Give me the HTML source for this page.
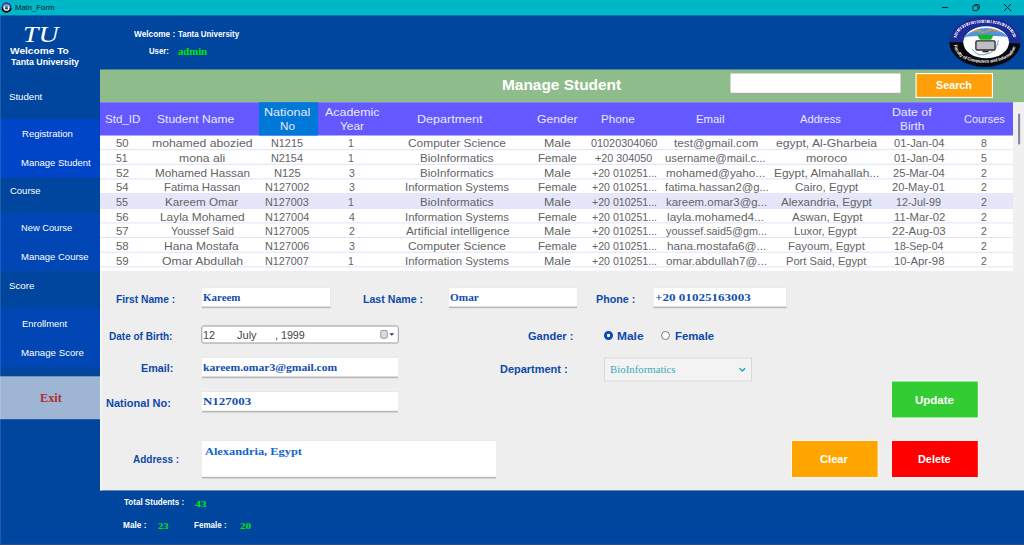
<!DOCTYPE html>
<html><head><meta charset="utf-8"><title>Main_Form</title>
<style>
*{box-sizing:border-box;margin:0;padding:0}
html,body{width:1024px;height:545px;overflow:hidden;background:#00469e;font-family:"Liberation Sans",sans-serif}
.a{position:absolute}
.t{position:absolute;white-space:pre;line-height:1;transform-origin:0 50%;display:block}
#win{position:absolute;left:0;top:0;width:1024px;height:545px;overflow:hidden;background:#00469e}
</style></head><body>
<div id="win">
<svg class="a" style="left:0;top:0" width="1024" height="545" viewBox="0 0 1024 545" shape-rendering="geometricPrecision">
<!-- title bar -->
<rect x="0" y="0" width="1024" height="15.4" fill="#00b7c7"/>
<!-- sidebar blocks -->
<rect x="0" y="118.7" width="100" height="58.8" fill="#0044c8"/>
<rect x="0" y="212.6" width="100" height="58.6" fill="#0046b5"/>
<rect x="0" y="308.2" width="100" height="58.8" fill="#0046b5"/>
<rect x="0" y="376.3" width="100" height="42.9" fill="#9eb5d4"/>
<!-- green band -->
<rect x="100" y="69.5" width="924" height="33" fill="#8fbc8b"/>
<rect x="730.5" y="73.5" width="170" height="20.6" fill="#a8a8a8"/>
<rect x="730.5" y="73.5" width="170" height="19.3" fill="#fff"/>
<rect x="915.5" y="73" width="77.5" height="25" fill="#fff"/>
<rect x="916.6" y="74.1" width="75.3" height="22.8" fill="#ffa00a"/>
<!-- table -->
<rect x="100" y="102.3" width="924" height="169" fill="#fff"/>
<rect x="1013" y="102.3" width="11" height="168.7" fill="#f0f0f0"/>
<rect x="1018" y="113.6" width="2.2" height="30.9" rx="1" fill="#8a889e"/>
<rect x="100" y="102.3" width="913" height="33.2" fill="#6359ff"/>
<rect x="259" y="102.3" width="59" height="33.2" fill="#0078d7"/>
<rect x="100" y="149.15" width="913" height="1" fill="#e2e2f8"/>
<rect x="100" y="163.80" width="913" height="1" fill="#e2e2f8"/>
<rect x="100" y="178.45" width="913" height="1" fill="#e2e2f8"/>
<rect x="100" y="193.10" width="913" height="1" fill="#e2e2f8"/>
<rect x="100" y="194.10" width="913" height="14.65" fill="#e6e6fa"/>
<rect x="100" y="207.75" width="913" height="1" fill="#e2e2f8"/>
<rect x="100" y="222.40" width="913" height="1" fill="#e2e2f8"/>
<rect x="100" y="237.05" width="913" height="1" fill="#e2e2f8"/>
<rect x="100" y="251.70" width="913" height="1" fill="#e2e2f8"/>
<rect x="100" y="266.35" width="913" height="1" fill="#e2e2f8"/>

<!-- form panel -->
<rect x="100" y="270.8" width="924" height="219.6" fill="#eeeeee"/><rect x="100" y="270.8" width="2" height="219.6" fill="#f4f4f4"/>
<g fill="#b9b9b9">
<rect x="202" y="287.5" width="128.5" height="20.7"/><rect x="449" y="287.5" width="128" height="20.7"/><rect x="653.3" y="287.5" width="133.2" height="20.7"/>
<rect x="202" y="357.5" width="196" height="20.7"/><rect x="202" y="391.8" width="196" height="20.7"/><rect x="202" y="440.5" width="294" height="38"/>
</g>
<g fill="#fff">
<rect x="202" y="287.5" width="128.5" height="19"/><rect x="449" y="287.5" width="128" height="19"/><rect x="653.3" y="287.5" width="133.2" height="19"/>
<rect x="202" y="357.5" width="196" height="19"/><rect x="202" y="391.8" width="196" height="19"/><rect x="202" y="440.5" width="294" height="36.3"/>
</g>
<!-- date picker -->
<rect x="201.8" y="326" width="196.5" height="17" rx="1.5" fill="#fff" stroke="#999" stroke-width="1"/>
<g transform="translate(380,330)"><rect x="0.8" y="0.6" width="6.4" height="7.6" rx="1.2" fill="#e4e6ee" stroke="#8e838c" stroke-width="0.9"/><path d="M2.2 2v5M4 2v5M5.8 2v5" stroke="#c4c8d8" stroke-width="0.6"/><path d="M9.4 3.2h4.8l-2.4 2.6z" fill="#1c3570"/></g>
<!-- radios -->
<circle cx="608.5" cy="335.5" r="3.1" fill="#fff" stroke="#0a4bb5" stroke-width="2.9"/>
<circle cx="665.5" cy="335.5" r="4" fill="#fff" stroke="#7c7c7c" stroke-width="1"/>
<!-- dropdown -->
<rect x="604.5" y="358" width="147" height="23" fill="#f3f3f3" stroke="#dadada" stroke-width="1"/>
<path d="M739.5 368.2L742.3 371L745.1 368.2" fill="none" stroke="#1fa3b8" stroke-width="1.4"/>
<!-- buttons -->
<rect x="891" y="380.5" width="87.8" height="38" fill="#f4fff4"/><rect x="892" y="381.5" width="85.8" height="36" fill="#32cd32"/>
<rect x="791" y="440" width="87.6" height="38" fill="#fff8ea"/><rect x="792" y="441" width="85.6" height="36" fill="#ffa500"/>
<rect x="891" y="440" width="87.8" height="38" fill="#fff0f0"/><rect x="892" y="441" width="85.8" height="36" fill="#ff0000"/>
<rect x="0" y="15.3" width="1" height="530" fill="#fff" opacity="0.12"/><rect x="0" y="543.4" width="1024" height="0.8" fill="#0050c0" opacity="0.6"/><rect x="0" y="544.1" width="1024" height="0.9" fill="#34507a"/>
<!-- window icon -->
<g transform="translate(1.1,2)"><defs><clipPath id="ic"><ellipse cx="5.4" cy="5.5" rx="5.3" ry="5.4"/></clipPath></defs><g clip-path="url(#ic)"><rect x="0" y="0" width="11" height="5.6" fill="#2a3cb4"/><rect x="0" y="5.6" width="11" height="6" fill="#0c0c16"/></g><ellipse cx="5.4" cy="5.6" rx="5" ry="5.1" fill="none" stroke="#cfd6ff" stroke-width="0.7" stroke-dasharray="0.7 1.1" opacity=".55"/><ellipse cx="5.4" cy="5.7" rx="3.2" ry="3.1" fill="#eef1fa"/><path d="M2.6 4.6 Q5.4 1.6 8.2 4.6 Z" fill="#4a8fe0"/><path d="M3.9 3.9h3l-.7 1.3h-1.6z" fill="#20c030"/><rect x="4" y="5.3" width="2.8" height="1.9" rx=".3" fill="#3a3a44"/></g>
<!-- window controls -->
<rect x="942" y="7" width="6" height="1" fill="#0c2430"/>
<g fill="none" stroke="#0c2430" stroke-width="1"><rect x="972.9" y="5.7" width="5" height="5" rx="1.2"/><path d="M974.5 5.5V5.3Q974.5 4.5 975.4 4.5H978.3Q979.3 4.5 979.3 5.4V8.3Q979.3 9.2 978.4 9.2"/><path d="M1004 4L1011 11M1011 4L1004 11"/></g>
</svg>
<!-- logo -->
<svg class="a" style="left:944px;top:12px" width="80" height="60" viewBox="0 0 727 545">
<defs><clipPath id="cl"><ellipse cx="372" cy="272" rx="324" ry="228"/></clipPath>
<clipPath id="ci"><ellipse cx="383" cy="275" rx="208" ry="146"/></clipPath>
<path id="arcb" d="M92 300 Q110 452 372 462 Q634 452 652 300"/>
<path id="arct" d="M100 232 Q130 92 372 84 Q614 92 644 232"/>
</defs>
<g clip-path="url(#cl)"><rect x="0" y="0" width="727" height="280" fill="#1e2d96"/><path d="M0 272 L727 286 L727 545 L0 545Z" fill="#08080f"/></g>
<ellipse cx="383" cy="275" rx="208" ry="146" fill="#fdfdfd"/>
<g clip-path="url(#ci)">
<path d="M150 250 Q383 40 620 250 L565 224 Q383 206 205 224Z" fill="#4f94e0"/>
<path d="M175 120h420v92h-420z" fill="#4f94e0" opacity=".0"/>
</g>
<path d="M270 182 Q300 160 330 178 T400 172 T500 180" fill="none" stroke="#d9962a" stroke-width="16" stroke-dasharray="34 7 22 5"/>
<path d="M298 206h154l-24 46h-100z" fill="#16b32c"/>
<g clip-path="url(#ci)"><path d="M255 335 Q300 420 420 372 Q490 330 492 255" fill="none" stroke="#58aee8" stroke-width="9"/>
<path d="M300 392 Q420 400 500 290" fill="none" stroke="#e3a24a" stroke-width="5" opacity=".8"/></g>
<rect x="290" y="262" width="174" height="83" rx="10" fill="#c4c4c8" stroke="#26262c" stroke-width="12"/>
<path d="M300 275h155M300 292h155M300 309h155M300 326h155" stroke="#aaaab0" stroke-width="5" stroke-dasharray="8 6"/>
<rect x="350" y="352" width="54" height="14" fill="#26262c"/>
<text font-family="'Liberation Sans',sans-serif" font-weight="bold" font-size="41" fill="#f4f4f4" letter-spacing="-1.5"><textPath href="#arcb" startOffset="0" textLength="690" lengthAdjust="spacingAndGlyphs">Faculty of Computers and Information</textPath></text>
<path d="M100 232 Q130 92 372 84 Q614 92 644 232" fill="none" stroke="#e8ebff" stroke-width="26" stroke-dasharray="13 6 22 5 9 7 30 6 12 9 18 5" opacity=".9"/>
<path d="M100 232 Q130 92 372 84 Q614 92 644 232" fill="none" stroke="#1e2d96" stroke-width="9" stroke-dasharray="6 14 10 9 5 17"/>
</svg>

<span class="t" style="left:15.00px;top:4px;font-family:'Liberation Sans', sans-serif;font-size:7.8px;font-weight:normal;font-style:normal;color:#04181e;transform:scaleX(1.0040);">Main_Form</span>
<span class="t" style="left:23.00px;top:23px;font-family:'Liberation Serif', serif;font-size:23.8px;font-weight:normal;font-style:italic;color:#ffffff;transform:scaleX(1.1640);">TU</span>
<span class="t" style="left:10.00px;top:46px;font-family:'Liberation Sans', sans-serif;font-size:9.7px;font-weight:bold;font-style:normal;color:#ffffff;transform:scaleX(1.0462);">Welcome To</span>
<span class="t" style="left:11.00px;top:58px;font-family:'Liberation Sans', sans-serif;font-size:8.3px;font-weight:bold;font-style:normal;color:#ffffff;transform:scaleX(1.0638);">Tanta University</span>
<span class="t" style="left:134.00px;top:31px;font-family:'Liberation Sans', sans-serif;font-size:8.2px;font-weight:bold;font-style:normal;color:#ffffff;transform:scaleX(1.0087);">Welcome :</span>
<span class="t" style="left:178.00px;top:31px;font-family:'Liberation Sans', sans-serif;font-size:8.2px;font-weight:bold;font-style:normal;color:#ffffff;transform:scaleX(0.9680);">Tanta University</span>
<span class="t" style="left:149.00px;top:48px;font-family:'Liberation Sans', sans-serif;font-size:8.2px;font-weight:bold;font-style:normal;color:#ffffff;transform:scaleX(0.9462);">User:</span>
<span class="t" style="left:178.00px;top:47px;font-family:'Liberation Serif', serif;font-size:10.2px;font-weight:bold;font-style:normal;color:#00e600;transform:scaleX(1.0475);">admin</span>
<span class="t" style="left:9.00px;top:92px;font-family:'Liberation Sans', sans-serif;font-size:9.4px;font-weight:normal;font-style:normal;color:#ffffff;transform:scaleX(1.0264);">Student</span>
<span class="t" style="left:22.00px;top:129px;font-family:'Liberation Sans', sans-serif;font-size:9.4px;font-weight:normal;font-style:normal;color:#ffffff;transform:scaleX(1.0166);">Registration</span>
<span class="t" style="left:21.00px;top:158px;font-family:'Liberation Sans', sans-serif;font-size:9.4px;font-weight:normal;font-style:normal;color:#ffffff;transform:scaleX(1.0138);">Manage Student</span>
<span class="t" style="left:10.00px;top:186px;font-family:'Liberation Sans', sans-serif;font-size:9.4px;font-weight:normal;font-style:normal;color:#ffffff;transform:scaleX(1.0116);">Course</span>
<span class="t" style="left:21.00px;top:223px;font-family:'Liberation Sans', sans-serif;font-size:9.4px;font-weight:normal;font-style:normal;color:#ffffff;transform:scaleX(0.9922);">New Course</span>
<span class="t" style="left:21.00px;top:252px;font-family:'Liberation Sans', sans-serif;font-size:9.4px;font-weight:normal;font-style:normal;color:#ffffff;transform:scaleX(1.0136);">Manage Course</span>
<span class="t" style="left:9.00px;top:281px;font-family:'Liberation Sans', sans-serif;font-size:9.4px;font-weight:normal;font-style:normal;color:#ffffff;transform:scaleX(1.0351);">Score</span>
<span class="t" style="left:22.00px;top:319px;font-family:'Liberation Sans', sans-serif;font-size:9.4px;font-weight:normal;font-style:normal;color:#ffffff;transform:scaleX(1.0075);">Enrollment</span>
<span class="t" style="left:21.00px;top:348px;font-family:'Liberation Sans', sans-serif;font-size:9.4px;font-weight:normal;font-style:normal;color:#ffffff;transform:scaleX(1.0325);">Manage Score</span>
<span class="t" style="left:40.00px;top:392px;font-family:'Liberation Serif', serif;font-size:12.5px;font-weight:bold;font-style:normal;color:#b03030;transform:scaleX(0.9852);">Exit</span>
<span class="t" style="left:502.00px;top:78px;font-family:'Liberation Sans', sans-serif;font-size:14.5px;font-weight:bold;font-style:normal;color:#ffffff;transform:scaleX(1.0640);">Manage Student</span>
<span class="t" style="left:936.00px;top:80px;font-family:'Liberation Sans', sans-serif;font-size:11.3px;font-weight:bold;font-style:normal;color:#ffffff;transform:scaleX(0.9527);">Search</span>
<span class="t" style="left:105.00px;top:114px;font-family:'Liberation Sans', sans-serif;font-size:11.3px;font-weight:normal;font-style:normal;color:#e9e8ff;transform:scaleX(1.0223);">Std_ID</span>
<span class="t" style="left:157.00px;top:114px;font-family:'Liberation Sans', sans-serif;font-size:11.3px;font-weight:normal;font-style:normal;color:#e9e8ff;transform:scaleX(1.0689);">Student Name</span>
<span class="t" style="left:264.00px;top:107px;font-family:'Liberation Sans', sans-serif;font-size:11.3px;font-weight:normal;font-style:normal;color:#e9e8ff;transform:scaleX(1.1155);">National</span>
<span class="t" style="left:280.00px;top:121px;font-family:'Liberation Sans', sans-serif;font-size:11.3px;font-weight:normal;font-style:normal;color:#e9e8ff;transform:scaleX(1.0300);">No</span>
<span class="t" style="left:325.00px;top:107px;font-family:'Liberation Sans', sans-serif;font-size:11.3px;font-weight:normal;font-style:normal;color:#e9e8ff;transform:scaleX(1.1005);">Academic</span>
<span class="t" style="left:340.00px;top:121px;font-family:'Liberation Sans', sans-serif;font-size:11.3px;font-weight:normal;font-style:normal;color:#e9e8ff;transform:scaleX(1.0549);">Year</span>
<span class="t" style="left:417.00px;top:114px;font-family:'Liberation Sans', sans-serif;font-size:11.3px;font-weight:normal;font-style:normal;color:#e9e8ff;transform:scaleX(1.1107);">Department</span>
<span class="t" style="left:537.00px;top:114px;font-family:'Liberation Sans', sans-serif;font-size:11.3px;font-weight:normal;font-style:normal;color:#e9e8ff;transform:scaleX(1.0736);">Gender</span>
<span class="t" style="left:601.00px;top:114px;font-family:'Liberation Sans', sans-serif;font-size:11.3px;font-weight:normal;font-style:normal;color:#e9e8ff;transform:scaleX(1.0356);">Phone</span>
<span class="t" style="left:696.00px;top:114px;font-family:'Liberation Sans', sans-serif;font-size:11.3px;font-weight:normal;font-style:normal;color:#e9e8ff;transform:scaleX(1.0055);">Email</span>
<span class="t" style="left:800.00px;top:114px;font-family:'Liberation Sans', sans-serif;font-size:11.3px;font-weight:normal;font-style:normal;color:#e9e8ff;transform:scaleX(0.9876);">Address</span>
<span class="t" style="left:892.00px;top:107px;font-family:'Liberation Sans', sans-serif;font-size:11.3px;font-weight:normal;font-style:normal;color:#e9e8ff;transform:scaleX(1.0877);">Date of</span>
<span class="t" style="left:900.00px;top:121px;font-family:'Liberation Sans', sans-serif;font-size:11.3px;font-weight:normal;font-style:normal;color:#e9e8ff;transform:scaleX(1.0512);">Birth</span>
<span class="t" style="left:964.00px;top:114px;font-family:'Liberation Sans', sans-serif;font-size:11.3px;font-weight:normal;font-style:normal;color:#e9e8ff;transform:scaleX(0.9666);">Courses</span>
<span class="t" style="left:116.00px;top:138px;font-family:'Liberation Sans', sans-serif;font-size:10.5px;font-weight:normal;font-style:normal;color:#636363;transform:scaleX(1.0832);">50</span>
<span class="t" style="left:152.00px;top:138px;font-family:'Liberation Sans', sans-serif;font-size:10.5px;font-weight:normal;font-style:normal;color:#636363;transform:scaleX(1.1633);">mohamed abozied</span>
<span class="t" style="left:271.00px;top:138px;font-family:'Liberation Sans', sans-serif;font-size:10.5px;font-weight:normal;font-style:normal;color:#636363;transform:scaleX(1.0334);">N1215</span>
<span class="t" style="left:348.00px;top:138px;font-family:'Liberation Sans', sans-serif;font-size:10.5px;font-weight:normal;font-style:normal;color:#636363;transform:scaleX(1.0000);">1</span>
<span class="t" style="left:408.00px;top:138px;font-family:'Liberation Sans', sans-serif;font-size:10.5px;font-weight:normal;font-style:normal;color:#636363;transform:scaleX(1.1335);">Computer Science</span>
<span class="t" style="left:544.00px;top:138px;font-family:'Liberation Sans', sans-serif;font-size:10.5px;font-weight:normal;font-style:normal;color:#636363;transform:scaleX(1.1810);">Male</span>
<span class="t" style="left:591.00px;top:138px;font-family:'Liberation Sans', sans-serif;font-size:10.5px;font-weight:normal;font-style:normal;color:#636363;transform:scaleX(1.0338);">01020304060</span>
<span class="t" style="left:674.00px;top:138px;font-family:'Liberation Sans', sans-serif;font-size:10.5px;font-weight:normal;font-style:normal;color:#636363;transform:scaleX(1.1165);">test@gmail.com</span>
<span class="t" style="left:776.00px;top:138px;font-family:'Liberation Sans', sans-serif;font-size:10.5px;font-weight:normal;font-style:normal;color:#636363;transform:scaleX(1.1615);">egypt, Al-Gharbeia</span>
<span class="t" style="left:894.00px;top:138px;font-family:'Liberation Sans', sans-serif;font-size:10.5px;font-weight:normal;font-style:normal;color:#636363;transform:scaleX(1.0676);">01-Jan-04</span>
<span class="t" style="left:981.00px;top:138px;font-family:'Liberation Sans', sans-serif;font-size:10.5px;font-weight:normal;font-style:normal;color:#636363;transform:scaleX(1.0000);">8</span>
<span class="t" style="left:116.00px;top:153px;font-family:'Liberation Sans', sans-serif;font-size:10.5px;font-weight:normal;font-style:normal;color:#636363;transform:scaleX(0.9968);">51</span>
<span class="t" style="left:179.00px;top:153px;font-family:'Liberation Sans', sans-serif;font-size:10.5px;font-weight:normal;font-style:normal;color:#636363;transform:scaleX(1.1614);">mona ali</span>
<span class="t" style="left:271.00px;top:153px;font-family:'Liberation Sans', sans-serif;font-size:10.5px;font-weight:normal;font-style:normal;color:#636363;transform:scaleX(1.0317);">N2154</span>
<span class="t" style="left:348.00px;top:153px;font-family:'Liberation Sans', sans-serif;font-size:10.5px;font-weight:normal;font-style:normal;color:#636363;transform:scaleX(1.0000);">1</span>
<span class="t" style="left:420.00px;top:153px;font-family:'Liberation Sans', sans-serif;font-size:10.5px;font-weight:normal;font-style:normal;color:#636363;transform:scaleX(1.1069);">BioInformatics</span>
<span class="t" style="left:538.00px;top:153px;font-family:'Liberation Sans', sans-serif;font-size:10.5px;font-weight:normal;font-style:normal;color:#636363;transform:scaleX(1.1058);">Female</span>
<span class="t" style="left:595.00px;top:153px;font-family:'Liberation Sans', sans-serif;font-size:10.5px;font-weight:normal;font-style:normal;color:#636363;transform:scaleX(1.0276);">+20 304050</span>
<span class="t" style="left:665.00px;top:153px;font-family:'Liberation Sans', sans-serif;font-size:10.5px;font-weight:normal;font-style:normal;color:#636363;transform:scaleX(1.0755);">username@mail.c...</span>
<span class="t" style="left:806.00px;top:153px;font-family:'Liberation Sans', sans-serif;font-size:10.5px;font-weight:normal;font-style:normal;color:#636363;transform:scaleX(1.1759);">moroco</span>
<span class="t" style="left:894.00px;top:153px;font-family:'Liberation Sans', sans-serif;font-size:10.5px;font-weight:normal;font-style:normal;color:#636363;transform:scaleX(1.0676);">01-Jan-04</span>
<span class="t" style="left:981.00px;top:153px;font-family:'Liberation Sans', sans-serif;font-size:10.5px;font-weight:normal;font-style:normal;color:#636363;transform:scaleX(1.0000);">5</span>
<span class="t" style="left:116.00px;top:168px;font-family:'Liberation Sans', sans-serif;font-size:10.5px;font-weight:normal;font-style:normal;color:#636363;transform:scaleX(1.1264);">52</span>
<span class="t" style="left:155.00px;top:168px;font-family:'Liberation Sans', sans-serif;font-size:10.5px;font-weight:normal;font-style:normal;color:#636363;transform:scaleX(1.1143);">Mohamed Hassan</span>
<span class="t" style="left:274.00px;top:168px;font-family:'Liberation Sans', sans-serif;font-size:10.5px;font-weight:normal;font-style:normal;color:#636363;transform:scaleX(1.0630);">N125</span>
<span class="t" style="left:349.00px;top:168px;font-family:'Liberation Sans', sans-serif;font-size:10.5px;font-weight:normal;font-style:normal;color:#636363;transform:scaleX(1.0000);">3</span>
<span class="t" style="left:420.00px;top:168px;font-family:'Liberation Sans', sans-serif;font-size:10.5px;font-weight:normal;font-style:normal;color:#636363;transform:scaleX(1.1069);">BioInformatics</span>
<span class="t" style="left:544.00px;top:168px;font-family:'Liberation Sans', sans-serif;font-size:10.5px;font-weight:normal;font-style:normal;color:#636363;transform:scaleX(1.1810);">Male</span>
<span class="t" style="left:592.00px;top:168px;font-family:'Liberation Sans', sans-serif;font-size:10.5px;font-weight:normal;font-style:normal;color:#636363;transform:scaleX(1.0084);">+20 010251...</span>
<span class="t" style="left:666.00px;top:168px;font-family:'Liberation Sans', sans-serif;font-size:10.5px;font-weight:normal;font-style:normal;color:#636363;transform:scaleX(1.1157);">mohamed@yaho...</span>
<span class="t" style="left:774.00px;top:168px;font-family:'Liberation Sans', sans-serif;font-size:10.5px;font-weight:normal;font-style:normal;color:#636363;transform:scaleX(1.1346);">Egypt, Almahallah...</span>
<span class="t" style="left:893.00px;top:168px;font-family:'Liberation Sans', sans-serif;font-size:10.5px;font-weight:normal;font-style:normal;color:#636363;transform:scaleX(1.0696);">25-Mar-04</span>
<span class="t" style="left:981.00px;top:168px;font-family:'Liberation Sans', sans-serif;font-size:10.5px;font-weight:normal;font-style:normal;color:#636363;transform:scaleX(1.0000);">2</span>
<span class="t" style="left:116.00px;top:182px;font-family:'Liberation Sans', sans-serif;font-size:10.5px;font-weight:normal;font-style:normal;color:#636363;transform:scaleX(1.0768);">54</span>
<span class="t" style="left:164.00px;top:182px;font-family:'Liberation Sans', sans-serif;font-size:10.5px;font-weight:normal;font-style:normal;color:#636363;transform:scaleX(1.0813);">Fatima Hassan</span>
<span class="t" style="left:265.00px;top:182px;font-family:'Liberation Sans', sans-serif;font-size:10.5px;font-weight:normal;font-style:normal;color:#636363;transform:scaleX(1.0428);">N127002</span>
<span class="t" style="left:349.00px;top:182px;font-family:'Liberation Sans', sans-serif;font-size:10.5px;font-weight:normal;font-style:normal;color:#636363;transform:scaleX(1.0000);">3</span>
<span class="t" style="left:405.00px;top:182px;font-family:'Liberation Sans', sans-serif;font-size:10.5px;font-weight:normal;font-style:normal;color:#636363;transform:scaleX(1.0864);">Information Systems</span>
<span class="t" style="left:538.00px;top:182px;font-family:'Liberation Sans', sans-serif;font-size:10.5px;font-weight:normal;font-style:normal;color:#636363;transform:scaleX(1.1058);">Female</span>
<span class="t" style="left:592.00px;top:182px;font-family:'Liberation Sans', sans-serif;font-size:10.5px;font-weight:normal;font-style:normal;color:#636363;transform:scaleX(1.0084);">+20 010251...</span>
<span class="t" style="left:665.00px;top:182px;font-family:'Liberation Sans', sans-serif;font-size:10.5px;font-weight:normal;font-style:normal;color:#636363;transform:scaleX(1.0766);">fatima.hassan2@g...</span>
<span class="t" style="left:795.00px;top:182px;font-family:'Liberation Sans', sans-serif;font-size:10.5px;font-weight:normal;font-style:normal;color:#636363;transform:scaleX(1.0958);">Cairo, Egypt</span>
<span class="t" style="left:892.00px;top:182px;font-family:'Liberation Sans', sans-serif;font-size:10.5px;font-weight:normal;font-style:normal;color:#636363;transform:scaleX(1.0542);">20-May-01</span>
<span class="t" style="left:981.00px;top:182px;font-family:'Liberation Sans', sans-serif;font-size:10.5px;font-weight:normal;font-style:normal;color:#636363;transform:scaleX(1.0000);">2</span>
<span class="t" style="left:116.00px;top:197px;font-family:'Liberation Sans', sans-serif;font-size:10.5px;font-weight:normal;font-style:normal;color:#636363;transform:scaleX(1.0316);">55</span>
<span class="t" style="left:165.00px;top:197px;font-family:'Liberation Sans', sans-serif;font-size:10.5px;font-weight:normal;font-style:normal;color:#636363;transform:scaleX(1.1081);">Kareem Omar</span>
<span class="t" style="left:265.00px;top:197px;font-family:'Liberation Sans', sans-serif;font-size:10.5px;font-weight:normal;font-style:normal;color:#636363;transform:scaleX(1.0284);">N127003</span>
<span class="t" style="left:348.00px;top:197px;font-family:'Liberation Sans', sans-serif;font-size:10.5px;font-weight:normal;font-style:normal;color:#636363;transform:scaleX(1.0000);">1</span>
<span class="t" style="left:420.00px;top:197px;font-family:'Liberation Sans', sans-serif;font-size:10.5px;font-weight:normal;font-style:normal;color:#636363;transform:scaleX(1.1069);">BioInformatics</span>
<span class="t" style="left:544.00px;top:197px;font-family:'Liberation Sans', sans-serif;font-size:10.5px;font-weight:normal;font-style:normal;color:#636363;transform:scaleX(1.1810);">Male</span>
<span class="t" style="left:592.00px;top:197px;font-family:'Liberation Sans', sans-serif;font-size:10.5px;font-weight:normal;font-style:normal;color:#636363;transform:scaleX(1.0084);">+20 010251...</span>
<span class="t" style="left:666.00px;top:197px;font-family:'Liberation Sans', sans-serif;font-size:10.5px;font-weight:normal;font-style:normal;color:#636363;transform:scaleX(1.0882);">kareem.omar3@g...</span>
<span class="t" style="left:781.00px;top:197px;font-family:'Liberation Sans', sans-serif;font-size:10.5px;font-weight:normal;font-style:normal;color:#636363;transform:scaleX(1.1033);">Alexandria, Egypt</span>
<span class="t" style="left:896.00px;top:197px;font-family:'Liberation Sans', sans-serif;font-size:10.5px;font-weight:normal;font-style:normal;color:#636363;transform:scaleX(1.0250);">12-Jul-99</span>
<span class="t" style="left:981.00px;top:197px;font-family:'Liberation Sans', sans-serif;font-size:10.5px;font-weight:normal;font-style:normal;color:#636363;transform:scaleX(1.0000);">2</span>
<span class="t" style="left:116.00px;top:212px;font-family:'Liberation Sans', sans-serif;font-size:10.5px;font-weight:normal;font-style:normal;color:#636363;transform:scaleX(1.0872);">56</span>
<span class="t" style="left:160.00px;top:212px;font-family:'Liberation Sans', sans-serif;font-size:10.5px;font-weight:normal;font-style:normal;color:#636363;transform:scaleX(1.1334);">Layla Mohamed</span>
<span class="t" style="left:265.00px;top:212px;font-family:'Liberation Sans', sans-serif;font-size:10.5px;font-weight:normal;font-style:normal;color:#636363;transform:scaleX(1.0403);">N127004</span>
<span class="t" style="left:349.00px;top:212px;font-family:'Liberation Sans', sans-serif;font-size:10.5px;font-weight:normal;font-style:normal;color:#636363;transform:scaleX(1.0000);">4</span>
<span class="t" style="left:405.00px;top:212px;font-family:'Liberation Sans', sans-serif;font-size:10.5px;font-weight:normal;font-style:normal;color:#636363;transform:scaleX(1.0864);">Information Systems</span>
<span class="t" style="left:538.00px;top:212px;font-family:'Liberation Sans', sans-serif;font-size:10.5px;font-weight:normal;font-style:normal;color:#636363;transform:scaleX(1.1058);">Female</span>
<span class="t" style="left:592.00px;top:212px;font-family:'Liberation Sans', sans-serif;font-size:10.5px;font-weight:normal;font-style:normal;color:#636363;transform:scaleX(1.0084);">+20 010251...</span>
<span class="t" style="left:667.00px;top:212px;font-family:'Liberation Sans', sans-serif;font-size:10.5px;font-weight:normal;font-style:normal;color:#636363;transform:scaleX(1.1306);">layla.mohamed4...</span>
<span class="t" style="left:792.00px;top:212px;font-family:'Liberation Sans', sans-serif;font-size:10.5px;font-weight:normal;font-style:normal;color:#636363;transform:scaleX(1.0962);">Aswan, Egypt</span>
<span class="t" style="left:894.00px;top:212px;font-family:'Liberation Sans', sans-serif;font-size:10.5px;font-weight:normal;font-style:normal;color:#636363;transform:scaleX(1.0778);">11-Mar-02</span>
<span class="t" style="left:981.00px;top:212px;font-family:'Liberation Sans', sans-serif;font-size:10.5px;font-weight:normal;font-style:normal;color:#636363;transform:scaleX(1.0000);">2</span>
<span class="t" style="left:116.00px;top:226px;font-family:'Liberation Sans', sans-serif;font-size:10.5px;font-weight:normal;font-style:normal;color:#636363;transform:scaleX(1.0909);">57</span>
<span class="t" style="left:171.00px;top:226px;font-family:'Liberation Sans', sans-serif;font-size:10.5px;font-weight:normal;font-style:normal;color:#636363;transform:scaleX(1.0353);">Youssef Said</span>
<span class="t" style="left:265.00px;top:226px;font-family:'Liberation Sans', sans-serif;font-size:10.5px;font-weight:normal;font-style:normal;color:#636363;transform:scaleX(1.0392);">N127005</span>
<span class="t" style="left:349.00px;top:226px;font-family:'Liberation Sans', sans-serif;font-size:10.5px;font-weight:normal;font-style:normal;color:#636363;transform:scaleX(1.0000);">2</span>
<span class="t" style="left:406.00px;top:226px;font-family:'Liberation Sans', sans-serif;font-size:10.5px;font-weight:normal;font-style:normal;color:#636363;transform:scaleX(1.1222);">Artificial intelligence</span>
<span class="t" style="left:544.00px;top:226px;font-family:'Liberation Sans', sans-serif;font-size:10.5px;font-weight:normal;font-style:normal;color:#636363;transform:scaleX(1.1810);">Male</span>
<span class="t" style="left:592.00px;top:226px;font-family:'Liberation Sans', sans-serif;font-size:10.5px;font-weight:normal;font-style:normal;color:#636363;transform:scaleX(1.0084);">+20 010251...</span>
<span class="t" style="left:666.00px;top:226px;font-family:'Liberation Sans', sans-serif;font-size:10.5px;font-weight:normal;font-style:normal;color:#636363;transform:scaleX(1.0284);">youssef.said5@gm...</span>
<span class="t" style="left:794.00px;top:226px;font-family:'Liberation Sans', sans-serif;font-size:10.5px;font-weight:normal;font-style:normal;color:#636363;transform:scaleX(1.0719);">Luxor, Egypt</span>
<span class="t" style="left:892.00px;top:226px;font-family:'Liberation Sans', sans-serif;font-size:10.5px;font-weight:normal;font-style:normal;color:#636363;transform:scaleX(1.0945);">22-Aug-03</span>
<span class="t" style="left:981.00px;top:226px;font-family:'Liberation Sans', sans-serif;font-size:10.5px;font-weight:normal;font-style:normal;color:#636363;transform:scaleX(1.0000);">2</span>
<span class="t" style="left:116.00px;top:241px;font-family:'Liberation Sans', sans-serif;font-size:10.5px;font-weight:normal;font-style:normal;color:#636363;transform:scaleX(1.0840);">58</span>
<span class="t" style="left:164.00px;top:241px;font-family:'Liberation Sans', sans-serif;font-size:10.5px;font-weight:normal;font-style:normal;color:#636363;transform:scaleX(1.1431);">Hana Mostafa</span>
<span class="t" style="left:265.00px;top:241px;font-family:'Liberation Sans', sans-serif;font-size:10.5px;font-weight:normal;font-style:normal;color:#636363;transform:scaleX(1.0414);">N127006</span>
<span class="t" style="left:349.00px;top:241px;font-family:'Liberation Sans', sans-serif;font-size:10.5px;font-weight:normal;font-style:normal;color:#636363;transform:scaleX(1.0000);">3</span>
<span class="t" style="left:408.00px;top:241px;font-family:'Liberation Sans', sans-serif;font-size:10.5px;font-weight:normal;font-style:normal;color:#636363;transform:scaleX(1.1335);">Computer Science</span>
<span class="t" style="left:538.00px;top:241px;font-family:'Liberation Sans', sans-serif;font-size:10.5px;font-weight:normal;font-style:normal;color:#636363;transform:scaleX(1.1058);">Female</span>
<span class="t" style="left:592.00px;top:241px;font-family:'Liberation Sans', sans-serif;font-size:10.5px;font-weight:normal;font-style:normal;color:#636363;transform:scaleX(1.0084);">+20 010251...</span>
<span class="t" style="left:667.00px;top:241px;font-family:'Liberation Sans', sans-serif;font-size:10.5px;font-weight:normal;font-style:normal;color:#636363;transform:scaleX(1.1171);">hana.mostafa6@...</span>
<span class="t" style="left:788.00px;top:241px;font-family:'Liberation Sans', sans-serif;font-size:10.5px;font-weight:normal;font-style:normal;color:#636363;transform:scaleX(1.0883);">Fayoum, Egypt</span>
<span class="t" style="left:894.00px;top:241px;font-family:'Liberation Sans', sans-serif;font-size:10.5px;font-weight:normal;font-style:normal;color:#636363;transform:scaleX(1.0076);">18-Sep-04</span>
<span class="t" style="left:981.00px;top:241px;font-family:'Liberation Sans', sans-serif;font-size:10.5px;font-weight:normal;font-style:normal;color:#636363;transform:scaleX(1.0000);">2</span>
<span class="t" style="left:116.00px;top:256px;font-family:'Liberation Sans', sans-serif;font-size:10.5px;font-weight:normal;font-style:normal;color:#636363;transform:scaleX(1.0898);">59</span>
<span class="t" style="left:162.00px;top:256px;font-family:'Liberation Sans', sans-serif;font-size:10.5px;font-weight:normal;font-style:normal;color:#636363;transform:scaleX(1.1667);">Omar Abdullah</span>
<span class="t" style="left:265.00px;top:256px;font-family:'Liberation Sans', sans-serif;font-size:10.5px;font-weight:normal;font-style:normal;color:#636363;transform:scaleX(1.0288);">N127007</span>
<span class="t" style="left:348.00px;top:256px;font-family:'Liberation Sans', sans-serif;font-size:10.5px;font-weight:normal;font-style:normal;color:#636363;transform:scaleX(1.0000);">1</span>
<span class="t" style="left:405.00px;top:256px;font-family:'Liberation Sans', sans-serif;font-size:10.5px;font-weight:normal;font-style:normal;color:#636363;transform:scaleX(1.0864);">Information Systems</span>
<span class="t" style="left:544.00px;top:256px;font-family:'Liberation Sans', sans-serif;font-size:10.5px;font-weight:normal;font-style:normal;color:#636363;transform:scaleX(1.1810);">Male</span>
<span class="t" style="left:592.00px;top:256px;font-family:'Liberation Sans', sans-serif;font-size:10.5px;font-weight:normal;font-style:normal;color:#636363;transform:scaleX(1.0084);">+20 010251...</span>
<span class="t" style="left:666.00px;top:256px;font-family:'Liberation Sans', sans-serif;font-size:10.5px;font-weight:normal;font-style:normal;color:#636363;transform:scaleX(1.1073);">omar.abdullah7@...</span>
<span class="t" style="left:786.00px;top:256px;font-family:'Liberation Sans', sans-serif;font-size:10.5px;font-weight:normal;font-style:normal;color:#636363;transform:scaleX(1.0589);">Port Said, Egypt</span>
<span class="t" style="left:894.00px;top:256px;font-family:'Liberation Sans', sans-serif;font-size:10.5px;font-weight:normal;font-style:normal;color:#636363;transform:scaleX(1.0804);">10-Apr-98</span>
<span class="t" style="left:981.00px;top:256px;font-family:'Liberation Sans', sans-serif;font-size:10.5px;font-weight:normal;font-style:normal;color:#636363;transform:scaleX(1.0000);">2</span>
<span class="t" style="left:116.00px;top:294px;font-family:'Liberation Sans', sans-serif;font-size:11.5px;font-weight:bold;font-style:normal;color:#0d49a8;transform:scaleX(0.8902);">First Name :</span>
<span class="t" style="left:363.00px;top:294px;font-family:'Liberation Sans', sans-serif;font-size:11.5px;font-weight:bold;font-style:normal;color:#0d49a8;transform:scaleX(0.9212);">Last Name :</span>
<span class="t" style="left:596.00px;top:294px;font-family:'Liberation Sans', sans-serif;font-size:11.5px;font-weight:bold;font-style:normal;color:#0d49a8;transform:scaleX(0.9300);">Phone :</span>
<span class="t" style="left:109.00px;top:331px;font-family:'Liberation Sans', sans-serif;font-size:11.5px;font-weight:bold;font-style:normal;color:#0d49a8;transform:scaleX(0.8713);">Date of Birth:</span>
<span class="t" style="left:528.00px;top:331px;font-family:'Liberation Sans', sans-serif;font-size:11.5px;font-weight:bold;font-style:normal;color:#0d49a8;transform:scaleX(0.9583);">Gander :</span>
<span class="t" style="left:617.00px;top:331px;font-family:'Liberation Sans', sans-serif;font-size:11.5px;font-weight:bold;font-style:normal;color:#0d49a8;transform:scaleX(1.0377);">Male</span>
<span class="t" style="left:675.00px;top:331px;font-family:'Liberation Sans', sans-serif;font-size:11.5px;font-weight:bold;font-style:normal;color:#0d49a8;transform:scaleX(0.9868);">Female</span>
<span class="t" style="left:141.00px;top:363px;font-family:'Liberation Sans', sans-serif;font-size:11.5px;font-weight:bold;font-style:normal;color:#0d49a8;transform:scaleX(0.9359);">Email:</span>
<span class="t" style="left:500.00px;top:364px;font-family:'Liberation Sans', sans-serif;font-size:11.5px;font-weight:bold;font-style:normal;color:#0d49a8;transform:scaleX(0.9529);">Department :</span>
<span class="t" style="left:106.00px;top:398px;font-family:'Liberation Sans', sans-serif;font-size:11.5px;font-weight:bold;font-style:normal;color:#0d49a8;transform:scaleX(0.9577);">National No:</span>
<span class="t" style="left:133.00px;top:454px;font-family:'Liberation Sans', sans-serif;font-size:11.5px;font-weight:bold;font-style:normal;color:#0d49a8;transform:scaleX(0.8704);">Address :</span>
<span class="t" style="left:203.00px;top:293px;font-family:'Liberation Serif', serif;font-size:10.4px;font-weight:bold;font-style:normal;color:#124eb0;transform:scaleX(1.0527);">Kareem</span>
<span class="t" style="left:450.00px;top:293px;font-family:'Liberation Serif', serif;font-size:10.4px;font-weight:bold;font-style:normal;color:#124eb0;transform:scaleX(1.0848);">Omar</span>
<span class="t" style="left:655.00px;top:293px;font-family:'Liberation Serif', serif;font-size:10.4px;font-weight:bold;font-style:normal;color:#124eb0;transform:scaleX(1.2588);">+20 01025163003</span>
<span class="t" style="left:203.00px;top:363px;font-family:'Liberation Serif', serif;font-size:10.4px;font-weight:bold;font-style:normal;color:#124eb0;transform:scaleX(1.1159);">kareem.omar3@gmail.com</span>
<span class="t" style="left:203.00px;top:397px;font-family:'Liberation Serif', serif;font-size:10.4px;font-weight:bold;font-style:normal;color:#124eb0;transform:scaleX(1.2481);">N127003</span>
<span class="t" style="left:205.00px;top:446px;font-family:'Liberation Serif', serif;font-size:10.8px;font-weight:bold;font-style:normal;color:#1265d0;transform:scaleX(1.1461);">Alexandria, Egypt</span>
<span class="t" style="left:610.00px;top:364px;font-family:'Liberation Serif', serif;font-size:11px;font-weight:normal;font-style:normal;color:#3aa9bd;transform:scaleX(0.9849);">BioInformatics</span>
<span class="t" style="left:203.00px;top:330px;font-family:'Liberation Sans', sans-serif;font-size:10.5px;font-weight:normal;font-style:normal;color:#444444;transform:scaleX(1.0276);">12</span>
<span class="t" style="left:237.00px;top:330px;font-family:'Liberation Sans', sans-serif;font-size:10.5px;font-weight:normal;font-style:normal;color:#444444;transform:scaleX(1.0507);">July</span>
<span class="t" style="left:275.00px;top:330px;font-family:'Liberation Sans', sans-serif;font-size:10.5px;font-weight:normal;font-style:normal;color:#444444;transform:scaleX(1.0195);">, 1999</span>
<span class="t" style="left:915.00px;top:395px;font-family:'Liberation Sans', sans-serif;font-size:11.3px;font-weight:bold;font-style:normal;color:#ffffff;transform:scaleX(1.0189);">Update</span>
<span class="t" style="left:820.00px;top:454px;font-family:'Liberation Sans', sans-serif;font-size:11.3px;font-weight:bold;font-style:normal;color:#ffffff;transform:scaleX(0.9882);">Clear</span>
<span class="t" style="left:918.00px;top:454px;font-family:'Liberation Sans', sans-serif;font-size:11.3px;font-weight:bold;font-style:normal;color:#ffffff;transform:scaleX(0.9615);">Delete</span>
<span class="t" style="left:124.00px;top:498px;font-family:'Liberation Sans', sans-serif;font-size:8.6px;font-weight:bold;font-style:normal;color:#ffffff;transform:scaleX(0.9359);">Total Students :</span>
<span class="t" style="left:195.00px;top:500px;font-family:'Liberation Serif', serif;font-size:8.5px;font-weight:bold;font-style:normal;color:#00e600;transform:scaleX(1.3523);">43</span>
<span class="t" style="left:123.00px;top:521px;font-family:'Liberation Sans', sans-serif;font-size:8.6px;font-weight:bold;font-style:normal;color:#ffffff;transform:scaleX(0.9629);">Male :</span>
<span class="t" style="left:158.00px;top:522px;font-family:'Liberation Serif', serif;font-size:8.5px;font-weight:bold;font-style:normal;color:#00e600;transform:scaleX(1.2389);">23</span>
<span class="t" style="left:194.00px;top:521px;font-family:'Liberation Sans', sans-serif;font-size:8.6px;font-weight:bold;font-style:normal;color:#ffffff;transform:scaleX(0.9357);">Female :</span>
<span class="t" style="left:240.00px;top:522px;font-family:'Liberation Serif', serif;font-size:8.5px;font-weight:bold;font-style:normal;color:#00e600;transform:scaleX(1.3128);">20</span>
</div>
</body></html>
